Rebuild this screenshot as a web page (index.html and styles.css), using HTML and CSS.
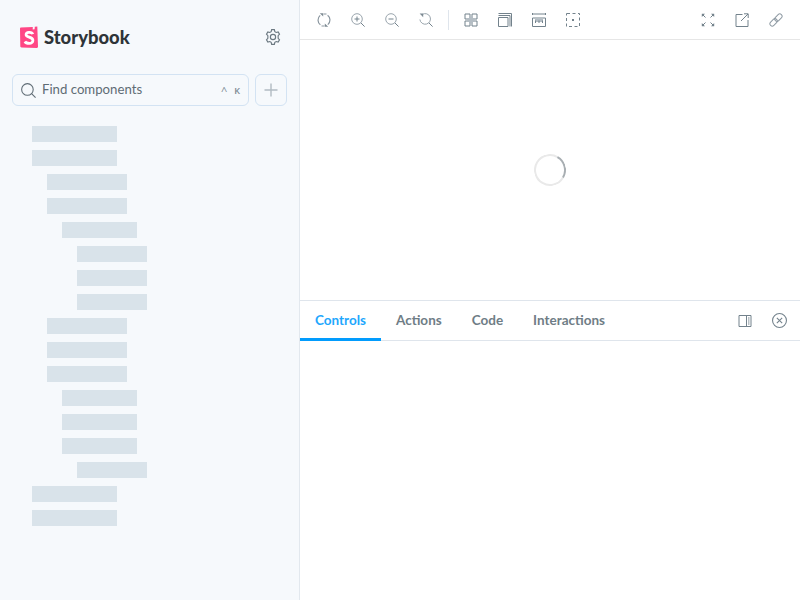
FILE: index.html
```html
<!DOCTYPE html>
<html lang="en">
<head>
<meta charset="utf-8">
<title>Storybook</title>
<link rel="stylesheet" href="styles.css">
</head>
<body>
<div class="app">
  <aside class="sidebar">
    <div class="brand-row">
      <div class="brand">
        <svg class="logo" viewBox="0 0 18 22" aria-hidden="true">
          <path class="logo-bg" d="M.6 1.600 12.800.9l-.1 2.500 1.900-.1.2-2.500L17.300.6 18 20.700c0 .7-.5 1.200-1.200 1.200L1.500 21.400C.8 21.400.3 20.900.3 20.200L0 2.800C0 2.100.1 1.700.6 1.600Z"/>
          <path class="logo-s" d="M12.800 8.200C12.400 6.900 10.600 6.200 8.900 6.300 7 6.400 6 7.400 6.100 8.800c.2 2.800 6.700 1.800 6.800 5.400.1 2-1.500 3.200-3.600 3.200-1.900 0-3.700-.6-4.400-1.900"/>
        </svg>
        <span class="wordmark">Storybook</span>
      </div>
      <svg class="icon gear" viewBox="0 0 14 14" aria-hidden="true">
        <circle cx="7" cy="7" r="2.300"/>
        <path d="M5.800.6h2.400l.4 1.700 1.200.7 1.700-.5 1.200 2.100L11.500 5.800v2.400l1.200 1.200-1.200 2.100-1.700-.5-1.200.7-.4 1.700H5.800l-.4-1.700-1.200-.7-1.700.5-1.200-2.100 1.200-1.200V5.800L1.300 4.600l1.200-2.100 1.700.5 1.200-.7Z"/>
      </svg>
    </div>
    <div class="search-row">
      <div class="search">
        <svg class="icon search-icon" viewBox="0 0 14 14" aria-hidden="true">
          <circle cx="6" cy="6" r="5.400"/>
          <path d="m9.900 9.900 3.700 3.700"/>
        </svg>
        <span class="search-text">Find components</span>
        <span class="shortcut"><span class="caret">^</span><span>K</span></span>
      </div>
      <div class="add">
        <svg class="plus" viewBox="0 0 14 14" aria-hidden="true"><path d="M7 .5v13M.5 7h13"/></svg>
      </div>
    </div>
    <div class="tree">
      <div class="bone d0"></div>
      <div class="bone d0"></div>
      <div class="bone d1"></div>
      <div class="bone d1"></div>
      <div class="bone d2"></div>
      <div class="bone d3"></div>
      <div class="bone d3"></div>
      <div class="bone d3"></div>
      <div class="bone d1"></div>
      <div class="bone d1"></div>
      <div class="bone d1"></div>
      <div class="bone d2"></div>
      <div class="bone d2"></div>
      <div class="bone d2"></div>
      <div class="bone d3"></div>
      <div class="bone d0"></div>
      <div class="bone d0"></div>
    </div>
  </aside>
  <main class="main">
    <div class="toolbar">
      <div class="tool-group">
        <button class="tool"><svg class="icon soft sync" viewBox="0 0 14 14"><path d="M3.200 2.400A6 6 0 0 0 3.400 11.800M10.800 11.600A6 6 0 0 0 10.600 2.200"/><path d="M6.500 1H9.500M7.500 13H4.500" class="sync-top"/><path class="fill" d="M2.800.2h3.400v3.400ZM11.200 13.800H7.800v-3.400Z"/></svg></button>
        <button class="tool"><svg class="icon soft" viewBox="0 0 14 14"><circle cx="6" cy="6" r="5.300"/><path class="dark" d="m9.900 9.900 3.700 3.700"/><path class="dark" d="M6 3.500v5M3.500 6h5"/></svg></button>
        <button class="tool"><svg class="icon soft" viewBox="0 0 14 14"><circle cx="6" cy="6" r="5.300"/><path class="dark" d="m9.900 9.900 3.700 3.700"/><path class="dark" d="M3.500 6h5"/></svg></button>
        <button class="tool"><svg class="icon soft" viewBox="0 0 14 14"><path d="M3.400 1.400A5.300 5.300 0 1 1 .9 6.500"/><path class="dark" d="m9.900 9.900 3.700 3.700"/><path class="fill" d="M.6.600h3.600v3.600Z"/></svg></button>
        <span class="divider"></span>
        <button class="tool"><svg class="icon" viewBox="0 0 14 14"><path d="M1 1h5v5H1ZM8 1h5v5H8ZM1 8h5v5H1ZM8 8h5v5H8Z"/><path class="soft-fill" d="M3.500 5h7v4h-7ZM5 3.500h4v7H5Z"/></svg></button>
        <button class="tool"><svg class="icon" viewBox="0 0 14 14"><path d="M.5 4.500h9.500v9H.5ZM.5 2.500h11.500v11M.5.500h13v13"/></svg></button>
        <button class="tool"><svg class="icon" viewBox="0 0 14 14"><path d="M.5 0v2M13.500 0v2M.5 1h13M.5 5h13v8.500H.5Z"/><path class="soft-fill" d="M3 6h8v3H3Z"/><path d="M3.500 7.500V10M7 7.500V10M10.500 7.500V10"/></svg></button>
        <button class="tool"><svg class="icon" viewBox="0 0 14 14"><path class="dash" d="M1 .5H13.500V13.500H.5V.5Z"/><path class="fill-dark" d="M6 6h2v2H6Z"/></svg></button>
      </div>
      <div class="tool-group">
        <button class="tool"><svg class="icon" viewBox="0 0 14 14"><path d="M1.500 1.500l3 3M12.500 1.500l-3 3M1.500 12.500l3-3M12.500 12.500l-3-3"/><path class="fill-dark" d="M.8.800h3.200l-3.200 3.200ZM13.200.800V4L10 .800ZM.8 13.200V10L4 13.200ZM13.200 13.200H10L13.200 10Z"/></svg></button>
        <button class="tool"><svg class="icon" viewBox="0 0 14 14"><path d="M7.500 1.500H1v12h12V7M6 8 13 1M9 .8h4.200V5"/></svg></button>
        <button class="tool"><svg class="icon link" viewBox="0 0 14 14"><rect x=".4" y="7.100" width="8.400" height="4.600" rx="2.300" transform="rotate(-45 4.600 9.400)"/><rect x="5.200" y="2.300" width="8.400" height="4.600" rx="2.300" transform="rotate(-45 9.400 4.600)"/></svg></button>
      </div>
    </div>
    <div class="preview">
      <div class="spinner"></div>
    </div>
    <div class="panel">
      <div class="tabbar">
        <div class="tabs">
          <span class="tab active">Controls</span>
          <span class="tab">Actions</span>
          <span class="tab">Code</span>
          <span class="tab">Interactions</span>
        </div>
        <div class="panel-tools">
          <button class="tool"><svg class="icon" viewBox="0 0 14 14"><path d="M1 1.500h12v11H1ZM8.500 1.500v11"/><path class="dots" d="M10 4h1.500M10 6h1.500M10 8h1.500M10 10h1.500"/></svg></button>
          <button class="tool"><svg class="icon x-circle" viewBox="0 0 14 14"><circle cx="7" cy="7" r="6.500"/><path d="m4.500 4.500 5 5M9.500 4.500l-5 5"/></svg></button>
        </div>
      </div>
      <div class="panel-body"></div>
    </div>
  </main>
</div>
</body>
</html>
```
FILE: styles.css
```css
* { box-sizing: border-box; }
html, body { margin: 0; padding: 0; height: 100%; }
body {
  font-family: "Lato", "Open Sans", sans-serif;
  color: #2e3438;
  background: #fff;
  overflow: hidden;
}
.app { display: flex; width: 800px; height: 600px; }

.sidebar {
  width: 300px;
  flex: none;
  background: #f6f9fc;
  border-right: 1px solid #e2e8ee;
  display: flex;
  flex-direction: column;
  padding: 26px 12px 0;
}
.brand-row {
  display: flex;
  align-items: center;
  justify-content: space-between;
  height: 22px;
  padding: 0 6px 0 8px;
}
.brand { display: flex; align-items: center; gap: 6px; }
.logo { width: 18px; height: 22px; display: block; }
.logo-bg { fill: #ff4785; }
.logo-s { fill: none; stroke: #fff; stroke-width: 2.800; }
.wordmark {
  font-weight: 900;
  font-size: 18.400px;
  line-height: 22px;
  color: #2e3438;
}
.icon {
  width: 14px;
  height: 14px;
  display: block;
  fill: none;
  stroke: #73828c;
  stroke-width: 1;
}
.icon.soft { stroke: #9aa5ad; }
.icon.sync { stroke: #8a969f; stroke-width: 1.200; }
.icon.link { stroke: #8e9aa3; }
.icon .fill { fill: #7d8a93; stroke: none; }
.icon .fill-dark { fill: #73828c; stroke: none; }
.icon .soft-fill { fill: #b4bdc4; stroke: none; }
.icon .dark { stroke: #73828c; }
.icon .dash { stroke-dasharray: 3 2.500; }
.gear { stroke: #6b7881; width: 16px; height: 16px; }
.x-circle { width: 15px; height: 15px; }

.search-row {
  display: flex;
  gap: 6px;
  margin-top: 26px;
  height: 32px;
}
.search {
  width: 237px;
  height: 32px;
  border: 1px solid #d3e3f3;
  border-radius: 6px;
  display: flex;
  align-items: center;
  padding: 0 8px 2px 8px;
  background: #f6f9fc;
}
.search-icon { stroke: #5f6c75; width: 15px; height: 15px; margin-top: 2px; }
.search-text {
  margin-left: 6px;
  font-size: 13.200px;
  color: #5f6c75;
  flex: 1;
}
.shortcut {
  display: flex;
  align-items: center;
  gap: 7px;
  font-family: "Open Sans", sans-serif;
  font-size: 9px;
  font-weight: 600;
  color: #7d8a93;
  padding-top: 2px;
}
.caret { font-size: 11px; font-weight: 400; }
.add {
  width: 32px;
  height: 32px;
  border: 1px solid #d3e3f3;
  border-radius: 6px;
  display: flex;
  align-items: center;
  justify-content: center;
}
.plus { width: 14px; height: 14px; fill: none; stroke: #b1bbc2; stroke-width: 1.400; }

.tree {
  display: flex;
  flex-direction: column;
  gap: 8px;
  margin-top: 20px;
}
.bone { height: 16px; background: #d9e3ea; }
.d0 { margin-left: 20px; width: 85px; }
.d1 { margin-left: 35px; width: 80px; }
.d2 { margin-left: 50px; width: 75px; }
.d3 { margin-left: 65px; width: 70px; }

.main { flex: 1; display: flex; flex-direction: column; min-width: 0; }
.toolbar {
  height: 40px;
  flex: none;
  display: flex;
  align-items: center;
  justify-content: space-between;
  padding: 0 7px;
  border-bottom: 1px solid #e6e6e6;
}
.tool-group { display: flex; align-items: center; }
.tool {
  width: 34px;
  height: 34px;
  padding: 0;
  margin: 0;
  border: 0;
  background: none;
  display: flex;
  align-items: center;
  justify-content: center;
}
.divider { width: 1px; height: 20px; background: #dfe5ec; margin: 0 5px; }

.preview {
  height: 260px;
  flex: none;
  display: flex;
  justify-content: center;
  padding-top: 114px;
}
.spinner {
  width: 32px;
  height: 32px;
  border-radius: 50%;
  border: 2px solid #e9e9e9;
  border-right-color: #a8aeb2;
  transform: rotate(-15deg);
}

.panel { flex: 1; display: flex; flex-direction: column; border-top: 1px solid #dfe5ec; }
.tabbar {
  height: 40px;
  flex: none;
  display: flex;
  align-items: stretch;
  justify-content: space-between;
  padding-right: 4px;
  border-bottom: 1px solid #dfe5ec;
}
.tabs { display: flex; }
.tab {
  padding: 0 15px;
  height: 40px;
  line-height: 38px;
  font-size: 13.500px;
  font-weight: 700;
  color: #6f7d86;
  border-bottom: 3px solid transparent;
}
.tab.active { color: #1ea7fd; border-bottom-color: #029cfd; }
.panel-tools { display: flex; align-items: center; }
.panel-body { flex: 1; }
```
